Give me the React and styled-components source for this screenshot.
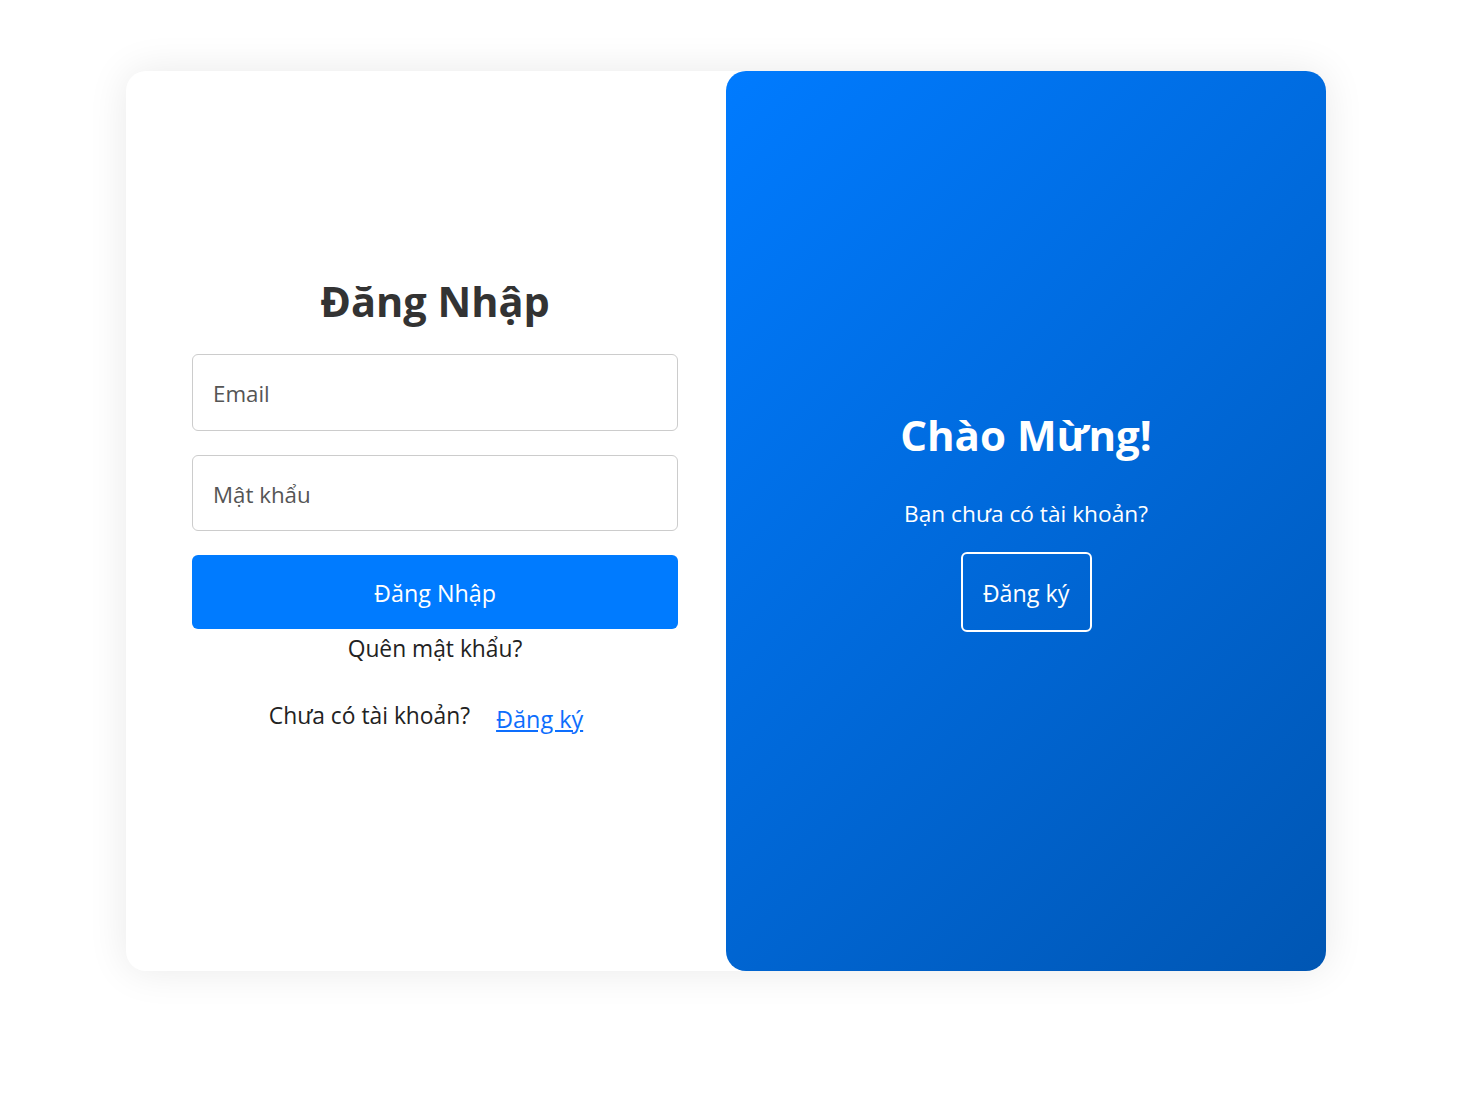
import React from "react";
import styled, { createGlobalStyle } from "styled-components";

const Global = createGlobalStyle`
  html, body { margin: 0; padding: 0; background: #fff; }
  body { font-family: "Open Sans", "Noto Sans", Arial, sans-serif; }
  * { box-sizing: border-box; }
`;

const Page = styled.div`
  padding: 71px 0 0 126px;
  min-height: 1094px;
`;

const Card = styled.div`
  width: 1200px;
  height: 900px;
  display: grid;
  grid-template-columns: 600px 600px;
  background: #fff;
  border-radius: 20px;
  box-shadow: 0 0 40px rgba(0, 0, 0, 0.09);
`;

const LeftPanel = styled.div`
  display: flex;
  flex-direction: column;
  justify-content: center;
  padding: 0 48px 0 66px;
`;

const Form = styled.form`
  display: flex;
  flex-direction: column;
  align-items: stretch;
  margin-top: -36px;
`;

const Title = styled.h1`
  margin: 0 0 28px;
  text-align: center;
  font-size: 41.5px;
  font-weight: 700;
  color: #333;
  line-height: 50px;
`;

const Input = styled.input`
  height: ${(p) => p.$h || 77}px;
  padding: 3px 20px 0;
  border: 1px solid #ccc;
  border-radius: 6px;
  font-family: inherit;
  font-size: 22.3px;
  color: #333;
  margin-bottom: 24px;
  outline: none;
  &::placeholder { color: #555; }
`;

const PrimaryButton = styled.button`
  height: 74px;
  padding: 3px 0 0;
  border: none;
  border-radius: 6px;
  background: #007bff;
  color: #fff;
  font-family: inherit;
  font-size: 23.3px;
  cursor: pointer;
`;

const Forgot = styled.p`
  margin: 5px 0 0;
  text-align: center;
  font-size: 22.8px;
  color: #222;
  line-height: 30px;
`;

const SignupRow = styled.p`
  margin: 36px 0 0;
  padding-right: 18px;
  display: flex;
  justify-content: center;
  align-items: baseline;
  gap: 26px;
  font-size: 22.8px;
  color: #222;
  line-height: 30px;
`;

const Link = styled.a`
  color: #0d6efd;
  font-size: 23.4px;
  text-decoration: underline;
  position: relative;
  top: 4px;
`;

const RightPanel = styled.div`
  border-radius: 20px;
  background: linear-gradient(135deg, #007bff 0%, #0056b3 100%);
  color: #fff;
  display: flex;
  flex-direction: column;
  align-items: center;
  justify-content: center;
`;

const Welcome = styled.h2`
  margin: 0;
  font-size: 42px;
  font-weight: 700;
  line-height: 50px;
`;

const Sub = styled.p`
  margin: 39px 0 23px;
  font-size: 22.7px;
  line-height: 30px;
`;

const GhostButton = styled.button`
  width: 131px;
  height: 80px;
  padding: 2px 0 0;
  border: 2px solid #fff;
  border-radius: 6px;
  background: transparent;
  color: #fff;
  font-family: inherit;
  font-size: 23.3px;
  cursor: pointer;
`;

export default function App() {
  return (
    <>
      <Global />
      <Page>
        <Card>
          <LeftPanel>
            <Form onSubmit={(e) => e.preventDefault()}>
              <Title>Đăng Nhập</Title>
              <Input type="email" placeholder="Email" />
              <Input type="password" placeholder="Mật khẩu" $h={76} />
              <PrimaryButton type="submit">Đăng Nhập</PrimaryButton>
              <Forgot>Quên mật khẩu?</Forgot>
              <SignupRow>
                <span>Chưa có tài khoản?</span>
                <Link href="#">Đăng ký</Link>
              </SignupRow>
            </Form>
          </LeftPanel>
          <RightPanel>
            <Welcome>Chào Mừng!</Welcome>
            <Sub>Bạn chưa có tài khoản?</Sub>
            <GhostButton type="button">Đăng ký</GhostButton>
          </RightPanel>
        </Card>
      </Page>
    </>
  );
}
